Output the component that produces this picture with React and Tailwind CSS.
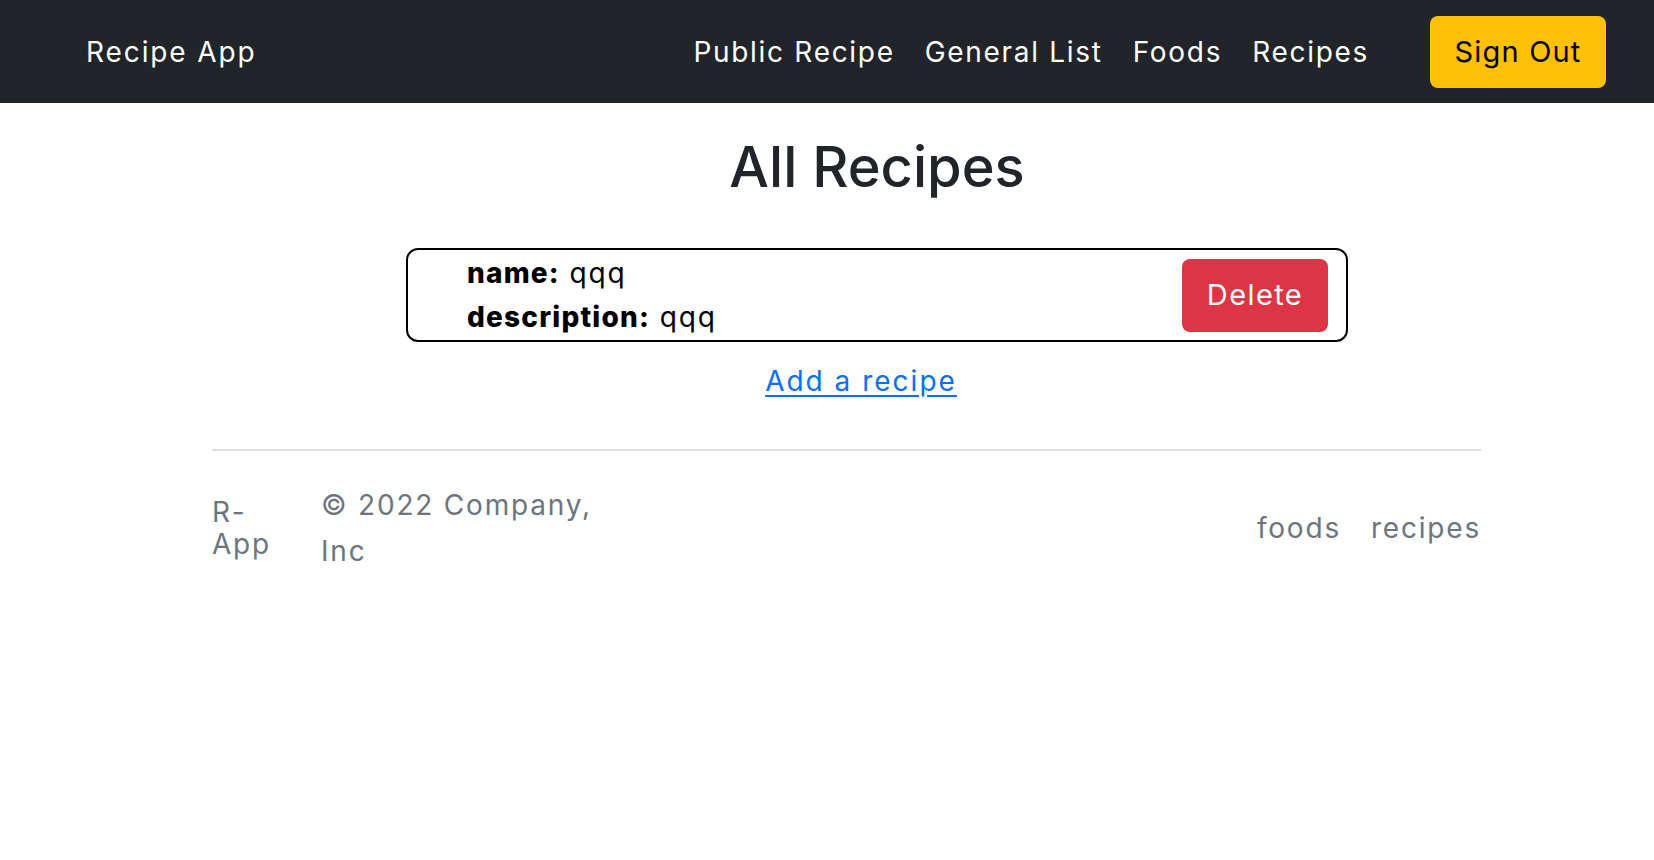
export default function App() {
  return (
    <div className="min-h-[860px] bg-white font-[Inter,sans-serif]">
      <nav className="h-[103px] bg-[#212529] flex items-center pl-[86px] pr-[48px]">
        <span className="text-[28px] leading-[40px] tracking-[1.9px] text-white">Recipe App</span>
        <div className="ml-auto flex items-center gap-[30px] tracking-[1.7px]">
          <a className="text-[28px] leading-[40px] text-white">Public Recipe</a>
          <a className="text-[28px] leading-[40px] text-white">General List</a>
          <a className="text-[28px] leading-[40px] text-white">Foods</a>
          <a className="text-[28px] leading-[40px] text-white">Recipes</a>
          <button className="ml-[31px] w-[176px] h-[72px] rounded-[8px] bg-[#ffc107] text-[29px] tracking-[1.2px] text-black">Sign Out</button>
        </div>
      </nav>
      <main className="ml-[406px] w-[942px]">
        <h1 className="mt-[31px] h-[67px] leading-[67px] text-center text-[56px] font-medium text-[#212529]">All Recipes</h1>
        <div className="mt-[47px] h-[94px] border-2 border-black rounded-[12px] flex items-center justify-between pl-[59px] pr-[18px]">
          <ul className="text-[28px] leading-[44px] tracking-[1.8px] text-black">
            <li><span className="font-extrabold tracking-[1.2px]">name:</span> qqq</li>
            <li><span className="font-extrabold tracking-[1.2px]">description:</span> qqq</li>
          </ul>
          <button className="w-[146px] h-[73px] rounded-[8px] bg-[#dc3545] text-white text-[29px] tracking-[1.4px]">Delete</button>
        </div>
        <div className="mt-[17px] flex justify-center pr-[32px]">
          <a className="text-[28px] leading-[44px] tracking-[2px] text-[#0d6efd] underline underline-offset-[4px]">Add a recipe</a>
        </div>
      </main>
      <div className="ml-[212px] w-[1269px] mt-[46px]">
        <div className="h-[2px] bg-[#dee2e6]" />
        <footer className="pt-[31px] flex items-center justify-between text-[#6c757d] text-[28px] tracking-[1.8px]">
          <div className="flex items-center">
            <span className="w-[72px] leading-[32px]">R-App</span>
            <p className="ml-[37px] w-[310px] leading-[46px]">© 2022 Company, Inc</p>
          </div>
          <div className="flex items-center gap-[30px] leading-[40px]">
            <a>foods</a>
            <a>recipes</a>
          </div>
        </footer>
      </div>
    </div>
  );
}
